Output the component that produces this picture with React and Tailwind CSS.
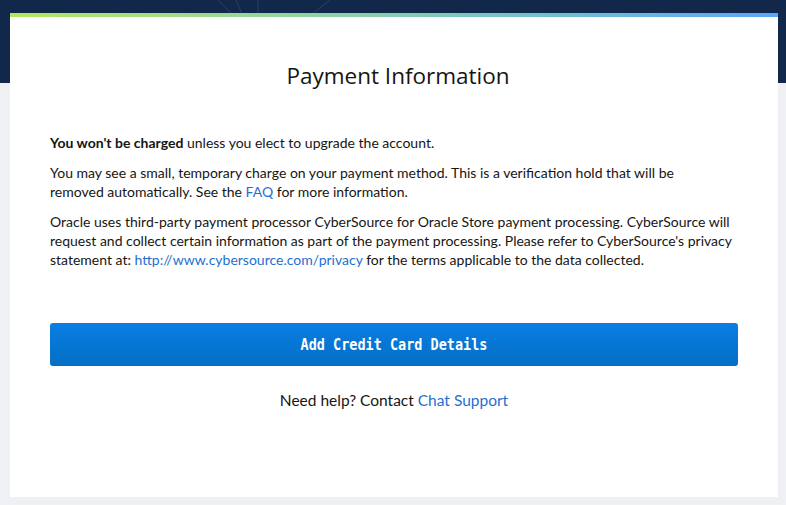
export default function App() {
  return (
    <div className="relative min-h-[505px] w-full bg-[#eef0f4] font-['Lato',sans-serif]">
      <div className="absolute inset-x-0 top-0 h-[83px] overflow-hidden bg-[#11284a]">
        <svg width="786" height="83" className="absolute left-0 top-0">
          <g stroke="#3a5070" strokeWidth="1" opacity="0.6" fill="none">
            <line x1="218" y1="0" x2="232" y2="14" />
            <line x1="236" y1="0" x2="242" y2="14" />
            <line x1="258" y1="0" x2="258" y2="14" />
            <line x1="330" y1="0" x2="312" y2="14" />
          </g>
        </svg>
      </div>
      <div className="relative pl-[10px] pr-[8px] pt-[13px] pb-[8px]">
        <div className="h-[4px] bg-gradient-to-r from-[#b2e65a] via-[#86cdb0] to-[#58a6f8]" />
        <div className="flex h-[480px] flex-col bg-white px-[40px]">
          <h1 className="mt-[44px] pl-[8px] text-center font-['Open_Sans',sans-serif] text-[22.5px] leading-[30px] text-[#161513]">
            Payment Information
          </h1>
          <div className="mt-[42px] whitespace-nowrap text-[14px] leading-[19px] text-[#161513]">
            <p>
              <span className="font-bold">You won't be charged</span> unless you elect to upgrade the account.
            </p>
            <p className="mt-[11px]">
              You may see a small, temporary charge on your payment method. This is a verification hold that will be
              <br />
              removed automatically. See the <a className="text-[#1f6fd0]">FAQ</a> for more information.
            </p>
            <p className="mt-[11px]">
              Oracle uses third-party payment processor CyberSource for Oracle Store payment processing. CyberSource will
              <br />
              request and collect certain information as part of the payment processing. Please refer to CyberSource's privacy
              <br />
              statement at: <a className="text-[#1f6fd0]">http://www.cybersource.com/privacy</a> for the terms applicable to the data collected.
            </p>
          </div>
          <button className="mt-[54px] h-[43px] w-full shrink-0 rounded-[3px] bg-gradient-to-b from-[#0a7ee4] to-[#046fc5] font-['DejaVu_Sans_Mono',monospace] text-[13.5px] font-bold text-white">
            <span className="inline-block scale-y-115">Add Credit Card Details</span>
          </button>
          <p className="mt-[24px] text-center text-[15.5px] leading-[20px] text-[#161513]">
            Need help? Contact <a className="text-[#1f6fd0]">Chat Support</a>
          </p>
        </div>
      </div>
    </div>
  );
}
